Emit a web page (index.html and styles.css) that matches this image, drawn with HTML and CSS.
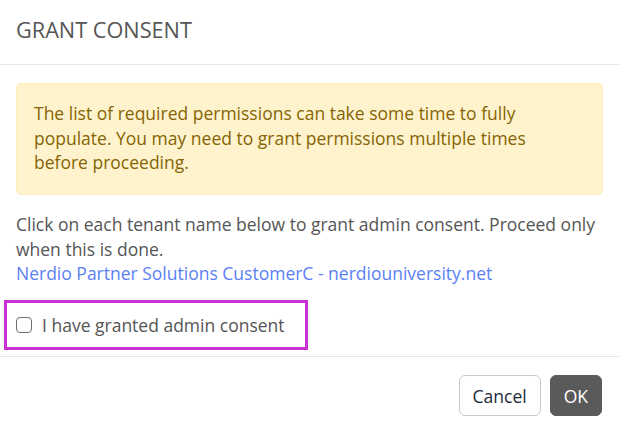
FILE: index.html
```html
<!DOCTYPE html>
<html lang="en">

<head>
    <meta charset="UTF-8">
    <meta name="viewport" content="width=device-width, initial-scale=1.0">
    <title>Grant Consent</title>
    <link rel="stylesheet" href="styles.css">
</head>

<body>
    <div class="modal">
        <div class="modal-header">
            <h4 class="modal-title">GRANT CONSENT</h4>
        </div>
        <div class="modal-body">
            <div class="alert">
                The list of required permissions can take some time to fully populate. You may need to grant
                permissions multiple times before proceeding.
            </div>
            <p class="hint">
                Click on each tenant name below to grant admin consent. Proceed only when this is done.<br>
                <a href="#" class="tenant-link">Nerdio Partner Solutions CustomerC - nerdiouniversity.net</a>
            </p>
            <div class="consent-check">
                <label class="check-label">
                    <input type="checkbox" class="check-input">
                    <span>I have granted admin consent</span>
                </label>
            </div>
        </div>
        <div class="modal-footer">
            <button class="btn btn-cancel">Cancel</button>
            <button class="btn btn-ok">OK</button>
        </div>
    </div>
</body>

</html>
```

FILE: styles.css
```css
body {
    margin: 0;
    font-family: "Open Sans", sans-serif;
    background-color: #fff;
    color: #555;
}

.modal {
    width: 619px;
    height: 431px;
    background-color: #fff;
}

.modal-header {
    height: 64px;
    padding: 0 16px;
    border-bottom: 1px solid #e5e5e5;
}

.modal-title {
    margin: 0;
    padding-top: 15px;
    font-size: 21.7px;
    line-height: 29px;
    font-weight: 400;
    color: #555;
}

.modal-body {
    padding: 18px 16px 6px 16px;
    border-bottom: 1px solid #e5e5e5;
    font-size: 17.5px;
    line-height: 24.5px;
}

.alert {
    background-color: #fff3cd;
    border: 1px solid #ffeeba;
    border-radius: 5px;
    color: #856404;
    padding: 17px 22px 19px 17px;
}

.hint {
    margin: 17.5px 0 0 0;
    color: #555;
}

.tenant-link {
    color: #5b7ff5;
    text-decoration: none;
}

.consent-check {
    box-sizing: border-box;
    margin: 14.5px 0 0 -12px;
    width: 304px;
    height: 50px;
    border: 3px solid #c832d0;
    display: flex;
    align-items: center;
    padding-left: 9px;
}

.check-label {
    display: flex;
    align-items: center;
    gap: 10px;
    color: #555;
}

.check-input {
    appearance: none;
    margin: 0;
    width: 16px;
    height: 16px;
    border: 1px solid #6f6f6f;
    border-radius: 4px;
    background-color: #fff;
}

.modal-footer {
    display: flex;
    justify-content: flex-end;
    gap: 9px;
    padding: 18px 17px 0 0;
}

.btn {
    font-family: "Open Sans", sans-serif;
    font-size: 17.5px;
    height: 41px;
    padding: 0 13px;
    border-radius: 6px;
    cursor: pointer;
}

.btn-cancel {
    background-color: #fff;
    border: 1px solid #ccc;
    color: #1e2b3c;
}

.btn-ok {
    background-color: #5a5a5a;
    border: 1px solid #5a5a5a;
    color: #fff;
}
```
